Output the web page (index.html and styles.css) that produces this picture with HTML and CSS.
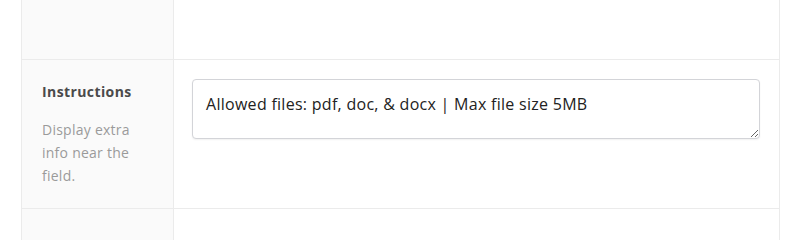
FILE: index.html
```html
<!DOCTYPE html>
<html>
<head>
<meta charset="utf-8">
<link rel="stylesheet" href="styles.css">
</head>
<body>
<div class="form">
  <div class="row row-top">
    <div class="label-cell"></div>
    <div class="field-cell"></div>
  </div>
  <div class="row">
    <div class="label-cell">
      <div class="label">Instructions</div>
      <div class="desc">Display extra info near the field.</div>
    </div>
    <div class="field-cell">
      <textarea class="input">Allowed files: pdf, doc, &amp; docx | Max file size 5MB</textarea>
    </div>
  </div>
  <div class="row row-bottom">
    <div class="label-cell"></div>
    <div class="field-cell"></div>
  </div>
</div>
</body>
</html>
```
FILE: styles.css
```css
html, body {
  margin: 0;
  padding: 0;
  background: #ffffff;
}
body {
  font-family: "Open Sans", "Noto Sans", sans-serif;
}
.form {
  margin-left: 21px;
  width: 759px;
  box-sizing: border-box;
  border-left: 1px solid #ebebeb;
  border-right: 1px solid #ebebeb;
}
.row {
  display: flex;
  border-bottom: 1px solid #ebebeb;
}
.row-top {
  height: 59px;
}
.row-bottom {
  height: 40px;
  border-bottom: none;
}
.label-cell {
  width: 152px;
  flex: none;
  background: #fafafa;
  border-right: 1px solid #ebebeb;
  padding: 22px 16px 21px 20px;
  box-sizing: border-box;
}
.row-top .label-cell,
.row-bottom .label-cell {
  padding: 0;
}
.label {
  font-size: 14px;
  font-weight: 700;
  color: #4a4a4a;
  line-height: 20px;
  letter-spacing: 0.4px;
}
.desc {
  margin-top: 16px;
  font-size: 14px;
  color: #9a9a9a;
  line-height: 23px;
  letter-spacing: 0.25px;
}
.field-cell {
  flex: 1;
  padding: 19px 19px 19px 18px;
  box-sizing: border-box;
}
.row-top .field-cell,
.row-bottom .field-cell {
  padding: 0;
}
.input {
  display: block;
  width: 100%;
  height: 60px;
  box-sizing: border-box;
  margin: 0;
  padding: 13px 13px;
  font-family: "Open Sans", "Noto Sans", sans-serif;
  font-size: 16px;
  line-height: 22px;
  letter-spacing: 0.28px;
  color: #222;
  border: 1px solid #d3d4d8;
  border-radius: 4px;
  box-shadow: 0 1px 2px rgba(0,0,0,0.06);
  resize: vertical;
  outline: none;
}
```
